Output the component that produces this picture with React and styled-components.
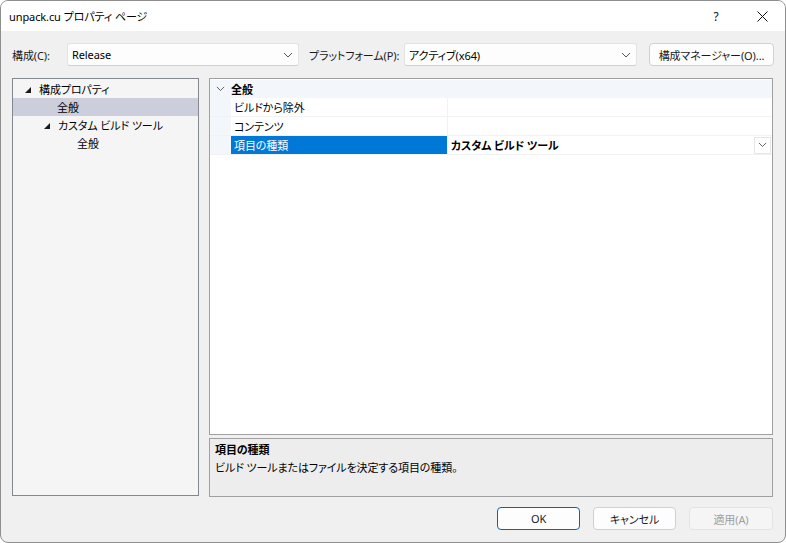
import styled, { createGlobalStyle } from "styled-components";

const GlobalStyle = createGlobalStyle`
  html, body {
    margin: 0;
    padding: 0;
    background: #ffffff;
  }
  body {
    font-family: "Noto Sans", "Noto Sans CJK JP", sans-serif;
    font-size: 11px;
    letter-spacing: -0.1px;
    font-feature-settings: "palt";
    color: #000;
    white-space: nowrap;
  }
`;

const Window = styled.div`
  width: 786px;
  height: 543px;
  box-sizing: border-box;
  border: 1px solid #8e8e8e;
  border-radius: 8px;
  overflow: hidden;
  background: #f0f0f0;
  display: flex;
  flex-direction: column;
`;

const TitleBar = styled.div`
  height: 30px;
  background: #ffffff;
  display: flex;
  align-items: center;
  padding-left: 8px;
  font-size: 11px;
`;

const TitleText = styled.span`
  flex: 1;
`;

const TitleButton = styled.div`
  width: 46px;
  height: 30px;
  display: flex;
  align-items: center;
  justify-content: center;
  font-size: 12px;
  color: #111;
`;

const Body = styled.div`
  flex: 1;
  display: flex;
  flex-direction: column;
  padding: 12px 11px 11px 11px;
`;

const TopRow = styled.div`
  display: flex;
  align-items: center;
  height: 23px;
`;

const Label = styled.span`
  width: ${p => p.$w}px;
  flex-shrink: 0;
  color: #1a1a1a;
`;

const Combo = styled.div`
  width: ${p => p.$w}px;
  flex-shrink: 0;
  height: 23px;
  box-sizing: border-box;
  background: #fdfdfd;
  border: 1px solid #e3e3e3;
  border-bottom-color: #d0d0d0;
  border-radius: 3px;
  display: flex;
  align-items: center;
  padding: 0 5px 0 4px;
  margin-right: ${p => p.$mr}px;
`;

const ComboText = styled.span`
  flex: 1;
`;

const Chevron = ({ size = 10 }) => (
  <svg width={size} height={size * 0.6} viewBox="0 0 10 6">
    <path d="M1 1 L5 5 L9 1" fill="none" stroke="#555" strokeWidth="1" />
  </svg>
);

const Button = styled.div`
  width: ${p => p.$w}px;
  flex-shrink: 0;
  height: 23px;
  box-sizing: border-box;
  border-radius: 4px;
  display: flex;
  align-items: center;
  justify-content: center;
  background: ${p => (p.$disabled ? "#f5f5f5" : "#fdfdfd")};
  color: ${p => (p.$disabled ? "#a0a0a0" : "#1a1a1a")};
  border: 1px solid ${p => (p.$primary ? "#0067c0" : p.$disabled ? "#e3e3e3" : "#d0d0d0")};
`;

const Main = styled.div`
  display: flex;
  gap: 10px;
  margin-top: 12px;
  height: 419px;
`;

const Tree = styled.div`
  width: 187px;
  height: 418px;
  box-sizing: border-box;
  border: 1px solid #828790;
  background: #f5f5f5;
  padding-top: 1px;
`;

const TreeRow = styled.div`
  height: 18px;
  display: flex;
  align-items: center;
  padding-left: ${p => p.$indent}px;
  background: ${p => (p.$selected ? "#cccedb" : "transparent")};
`;

const Arrow = styled.span`
  width: 0;
  height: 0;
  border-left: 6px solid transparent;
  border-bottom: 6px solid #1a1a1a;
  margin-right: 8px;
  margin-top: 1px;
`;

const RightCol = styled.div`
  flex: 1;
  display: flex;
  flex-direction: column;
  gap: 3px;
  margin-right: 1px;
`;

const Grid = styled.div`
  height: 358px;
  box-sizing: border-box;
  border: 1px solid #a0a0a0;
  background: #ffffff;
  padding-top: 1px;
`;

const CategoryRow = styled.div`
  height: 18px;
  display: flex;
  align-items: center;
  background: #f3f6fb;
  font-weight: 700;
`;

const Gutter = styled.div`
  width: 21px;
  height: 100%;
  display: flex;
  align-items: center;
  justify-content: center;
  background: #f3f6fb;
`;

const PropRow = styled.div`
  height: 19px;
  box-sizing: border-box;
  display: flex;
  border-bottom: 1px solid #f0f2f5;
`;

const NameCell = styled.div`
  width: 213px;
  padding-left: 3px;
  display: flex;
  align-items: center;
  background: ${p => (p.$selected ? "#0078d7" : "#fff")};
  color: ${p => (p.$selected ? "#fff" : "#000")};
  border-right: 1px solid #f0f2f5;
`;

const ValueCell = styled.div`
  flex: 1;
  display: flex;
  align-items: center;
  padding-left: 3px;
  font-weight: 700;
`;

const DropBtn = styled.div`
  width: 17px;
  height: 17px;
  box-sizing: border-box;
  border: 1px solid #e6e6e6;
  background: #fff;
  display: flex;
  align-items: center;
  justify-content: center;
  margin-right: 1px;
`;

const Description = styled.div`
  height: 59px;
  box-sizing: border-box;
  border: 1px solid #a0a0a0;
  background: #ededed;
  padding: 2px 5px;
  line-height: 18px;
`;

const DescTitle = styled.div`
  font-weight: 700;
`;

const BottomRow = styled.div`
  display: flex;
  justify-content: flex-end;
  gap: 13px;
  margin-top: 10px;
  margin-right: 1px;
`;

export default function App() {
  return (
    <>
      <GlobalStyle />
      <Window>
        <TitleBar>
          <TitleText>unpack.cu プロパティ ページ</TitleText>
          <TitleButton>?</TitleButton>
          <TitleButton>
            <svg width="11" height="11" viewBox="0 0 11 11">
              <path d="M0.5 0.5 L10.5 10.5 M10.5 0.5 L0.5 10.5" stroke="#111" strokeWidth="1" />
            </svg>
          </TitleButton>
        </TitleBar>
        <Body>
          <TopRow>
            <Label $w={55}>構成(C):</Label>
            <Combo $w={232} $mr={10}>
              <ComboText>Release</ComboText>
              <Chevron />
            </Combo>
            <Label $w={95}>プラットフォーム(P):</Label>
            <Combo $w={233} $mr={12}>
              <ComboText>アクティブ(x64)</ComboText>
              <Chevron />
            </Combo>
            <Button $w={125}>構成マネージャー(O)...</Button>
          </TopRow>
          <Main>
            <Tree>
              <TreeRow $indent={12}><Arrow />構成プロパティ</TreeRow>
              <TreeRow $indent={44} $selected>全般</TreeRow>
              <TreeRow $indent={31}><Arrow />カスタム ビルド ツール</TreeRow>
              <TreeRow $indent={64}>全般</TreeRow>
            </Tree>
            <RightCol>
              <Grid>
                <CategoryRow>
                  <Gutter><Chevron size={9} /></Gutter>
                  全般
                </CategoryRow>
                <PropRow>
                  <Gutter />
                  <NameCell>ビルドから除外</NameCell>
                  <ValueCell />
                </PropRow>
                <PropRow>
                  <Gutter />
                  <NameCell>コンテンツ</NameCell>
                  <ValueCell />
                </PropRow>
                <PropRow>
                  <Gutter />
                  <NameCell $selected>項目の種類</NameCell>
                  <ValueCell>
                    <ComboText>カスタム ビルド ツール</ComboText>
                    <DropBtn><Chevron size={9} /></DropBtn>
                  </ValueCell>
                </PropRow>
              </Grid>
              <Description>
                <DescTitle>項目の種類</DescTitle>
                <div>ビルド ツールまたはファイルを決定する項目の種類。</div>
              </Description>
            </RightCol>
          </Main>
          <BottomRow>
            <Button $w={83} $primary>OK</Button>
            <Button $w={83}>キャンセル</Button>
            <Button $w={84} $disabled>適用(A)</Button>
          </BottomRow>
        </Body>
      </Window>
    </>
  );
}
